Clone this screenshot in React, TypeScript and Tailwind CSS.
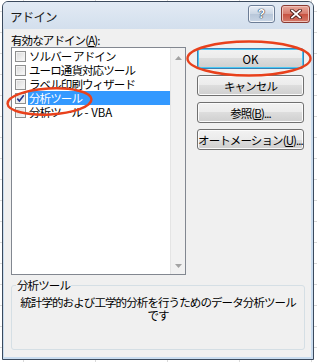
import React from "react";

const FONT = "font-['Noto_Sans_CJK_JP',sans-serif]";

function CheckBox({ checked }: { checked?: boolean }) {
  return (
    <div className="ml-[3px] w-[11px] h-[11px] shrink-0 border border-[#8e8f8f] bg-[linear-gradient(135deg,#d8d8d8,#fbfbfb)] shadow-[inset_0_0_0_1px_#f2f2f2] flex items-center justify-center">
      {checked && (
        <svg width="9" height="9" viewBox="0 0 9 9">
          <path d="M1.3 4.6 L3.4 7 L7.8 1.3" fill="none" stroke="#23358e" strokeWidth="1.6" />
        </svg>
      )}
    </div>
  );
}

function Item({ label, checked, selected }: { label: React.ReactNode; checked?: boolean; selected?: boolean }) {
  return (
    <div className="flex items-center h-[14px]">
      <CheckBox checked={checked} />
      <div
        className={
          selected
            ? "ml-[2px] flex-1 h-[14px] bg-[#3399ff] text-white pl-[1px] leading-[14px] whitespace-nowrap"
            : "ml-[2px] flex-1 h-[14px] pl-[1px] leading-[14px] whitespace-nowrap"
        }
      >
        {label}
      </div>
    </div>
  );
}

function Btn({ children, focused }: { children: React.ReactNode; focused?: boolean }) {
  return (
    <div
      className={
        focused
          ? "w-[107px] h-[21px] rounded-[3px] border border-[#3c7fb1] bg-[linear-gradient(#f2f2f2,#ebebeb_50%,#dddddd_50%,#cfcfcf)] shadow-[inset_0_0_0_1px_#48c8f4] flex items-center justify-center leading-[14px]"
          : "w-[107px] h-[21px] rounded-[3px] border border-[#707070] bg-[linear-gradient(#f2f2f2,#ebebeb_50%,#dddddd_50%,#cfcfcf)] shadow-[inset_0_0_0_1px_#fbfbfb] flex items-center justify-center leading-[14px]"
      }
    >
      {children}
    </div>
  );
}

export default function App() {
  return (
    <div
      className={`relative w-[317px] h-[362px] overflow-hidden bg-white bg-[linear-gradient(to_right,#dadada_1px,transparent_1px),linear-gradient(to_bottom,#dadada_1px,transparent_1px)] bg-[size:72px_21px] bg-[position:23px_11px] pt-[1px] pl-[2px] ${FONT} text-[11.5px] tracking-[-0.9px] text-black`}
    >
      {/* dialog window */}
      <div className="w-[312px] h-[359px] border border-[#3b4a5d] rounded-t-[6px] bg-[#c9dcef] flex flex-col pl-[1px] pr-[2px] pb-[2px]">
        {/* title bar */}
        <div className="h-[27px] shrink-0 flex items-start -ml-[1px] -mr-[2px] pl-[7px] pr-[3px] rounded-t-[5px] bg-[linear-gradient(#e2eaf4,#d3dfed)]">
          <div className="pt-[8px] leading-[14px] text-[12.5px] tracking-[-0.8px] text-[#1b1b1b]">アドイン</div>
          <div className="ml-auto mt-[3px] flex gap-[6px]">
            <div className="w-[27px] h-[18px] rounded-[3px] border border-[#6c7d96] bg-[linear-gradient(#e9eef5,#c9d5e4_50%,#b7c6d9_50%,#c8d5e5)] shadow-[inset_0_0_0_1px_#f3f6fa] flex items-center justify-center">
              <span className="text-[12px] font-bold leading-[12px] text-white [text-shadow:0_0_1px_#25344a,0_0_1px_#25344a,0_0_1px_#25344a] font-['Liberation_Sans',sans-serif] tracking-normal">?</span>
            </div>
            <div className="w-[29px] h-[18px] rounded-[3px] border border-[#8a3a32] bg-[linear-gradient(#e8a99d,#d67a6c_50%,#c7503f_50%,#d47a6b)] shadow-[inset_0_0_0_1px_#efc2b9] flex items-center justify-center">
              <svg width="12" height="10" viewBox="0 0 12 10">
                <path d="M2 1.5 L10 8.5 M10 1.5 L2 8.5" stroke="#4a1e18" strokeWidth="3.6" strokeLinecap="square" />
                <path d="M2 1.5 L10 8.5 M10 1.5 L2 8.5" stroke="#ffffff" strokeWidth="1.8" strokeLinecap="square" />
              </svg>
            </div>
          </div>
        </div>

        {/* content */}
        <div className="flex-1 bg-[#f0f0f0] pl-[7px] pt-[4px] flex flex-col">
          <div className="flex">
            <div className="w-[175px] flex flex-col">
              <div className="h-[14px] leading-[14px] whitespace-nowrap">
                有効なアドイン(<span className="underline underline-offset-[1px]">A</span>):
              </div>
              <div className="h-[228px] border border-[#828790] bg-white flex">
                <div className="flex-1 pt-[1px] flex flex-col">
                  <Item label="ソルバー アドイン" />
                  <Item label="ユーロ通貨対応ツール" />
                  <Item label="ラベル印刷ウィザード" />
                  <Item label="分析ツール" checked selected />
                  <Item
                    label={
                      <>
                        分析ツール<span className="tracking-normal"> - VBA</span>
                      </>
                    }
                  />
                </div>
                <div className="w-[15px] bg-[#f1f1f1] border-l border-[#e4e4e4] flex flex-col justify-between items-center pt-[8px] pb-[6px]">
                  <svg width="7" height="4" viewBox="0 0 7 4">
                    <path d="M3.5 0 L7 4 L0 4 Z" fill="#a3a3a3" />
                  </svg>
                  <svg width="7" height="4" viewBox="0 0 7 4">
                    <path d="M0 0 L7 0 L3.5 4 Z" fill="#a3a3a3" />
                  </svg>
                </div>
              </div>
            </div>
            <div className="ml-[11px] pt-[15px] flex flex-col gap-[6px]">
              <Btn focused>
                <span className="tracking-normal">OK</span>
              </Btn>
              <Btn>キャンセル</Btn>
              <Btn>
                <span>
                  参照(<span className="underline underline-offset-[1px]">B</span>)...
                </span>
              </Btn>
              <Btn>
                <span className="whitespace-nowrap">
                  オートメーション(<span className="underline underline-offset-[1px]">U</span>)...
                </span>
              </Btn>
            </div>
          </div>

          <fieldset className="mt-[4px] w-[294px] h-[71px] border border-[#d5dfe5] rounded-[3px] pl-[4px] pr-[4px]">
            <legend className="px-[1px] leading-[13px]">分析ツール</legend>
            <p className="mt-[4px] text-center leading-[13px] whitespace-nowrap">
              統計学的および工学的分析を行うためのデータ分析ツール
              <br />
              です
            </p>
          </fieldset>
        </div>
      </div>

      {/* red annotation ellipses */}
      <svg className="absolute left-0 top-0 pointer-events-none" width="317" height="362" viewBox="0 0 317 362">
        <ellipse cx="49.5" cy="101.5" rx="42" ry="13" fill="none" stroke="#e8411c" strokeWidth="2.4" transform="rotate(-3 49.5 101.5)" />
        <ellipse cx="249" cy="58.5" rx="61.5" ry="17" fill="none" stroke="#e8411c" strokeWidth="2.4" />
      </svg>
    </div>
  );
}
